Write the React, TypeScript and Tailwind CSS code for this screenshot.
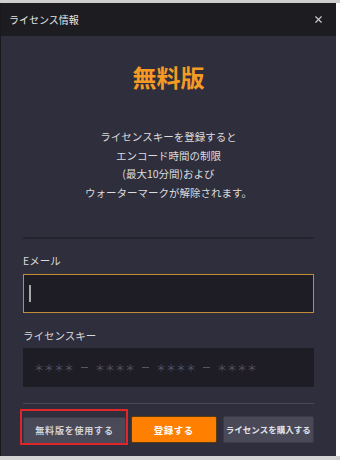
import { X } from "lucide-react";

const font = { fontFamily: '"Noto Sans CJK JP", "Noto Sans", sans-serif' };

export default function App() {
  const groups = ["＊＊＊＊", "＊＊＊＊", "＊＊＊＊", "＊＊＊＊"];
  return (
    <div className="w-[340px] h-[460px] bg-white flex flex-col" style={font}>
      <div className="h-[3px] w-full bg-[#cfcfcf]" />
      <div className="w-[336px] h-[453px] bg-[#2f2e3c] flex flex-col border-l border-[#18181d]">
        {/* title bar */}
        <div className="h-[33px] bg-[#1c1c21] flex items-center justify-between pl-[8px] pr-[12px]">
          <span className="text-[10px] text-[#e4e4e4] leading-none">ライセンス情報</span>
          <X className="w-[11px] h-[11px] text-[#cfcfcf]" strokeWidth={2.5} />
        </div>

        <div className="flex flex-col px-[22px]">
          <h1 className="mt-[26px] text-center text-[24px] leading-[30px] font-bold text-[#f59b24]">
            無料版
          </h1>

          <p className="mt-[36px] text-center text-[10.5px] leading-[18.5px] text-[#dcdcdc]">
            ライセンスキーを登録すると
            <br />
            エンコード時間の制限
            <br />
            (最大10分間)および
            <br />
            ウォーターマークが解除されます。
          </p>

          <div className="mt-[35px] h-[2px] bg-[#24232e]" />

          <label className="mt-[16px] text-[10.5px] leading-[12px] text-[#d8d8d8]">Eメール</label>
          <div className="mt-[7px] h-[39px] bg-[#1e1d26] border border-[#c38d35] flex items-center pl-[5px]">
            <div className="w-[1.5px] h-[17px] bg-[#a8a8a8]" />
          </div>

          <label className="mt-[17px] text-[10.5px] leading-[12px] text-[#d8d8d8]">ライセンスキー</label>
          <div className="mt-[6px] h-[39px] bg-[#1e1d26] flex items-center pl-[11px] text-[10px] text-[#55545f]">
            {groups.map((g, i) => (
              <span key={i} className="flex items-center">
                {i > 0 && <span className="w-[7px] h-[1px] bg-[#55545f] mx-[7px]" />}
                <span>{g}</span>
              </span>
            ))}
          </div>

          <div className="mt-[16px] h-[1px] bg-[#4a4958]" />

          <div className="mt-[11px] flex items-center">
            <div className="relative">
              <div className="absolute -left-[3px] -top-[6px] w-[108px] h-[36px] border-2 border-[#e0262b]" />
              <button className="w-[103px] h-[27px] bg-[#4a4958] border border-[#3b3a47] rounded-[2px] text-[9px] font-bold tracking-[0.8px] text-[#d4d4d8]">
                無料版を使用する
              </button>
            </div>
            <button className="ml-[5px] w-[86px] h-[27px] bg-[#ff8000] border border-[#5a3a10] rounded-[2px] text-[9.5px] font-bold tracking-[0.5px] text-white">
              登録する
            </button>
            <button className="ml-[6px] w-[92px] h-[27px] bg-[#4a4958] border border-[#3b3a47] rounded-[2px] text-[8.5px] font-bold text-[#e4e4e8] whitespace-nowrap">
              ライセンスを購入する
            </button>
          </div>
        </div>
      </div>
      <div className="flex-1 bg-[#d4d4d4] w-full" />
    </div>
  );
}
